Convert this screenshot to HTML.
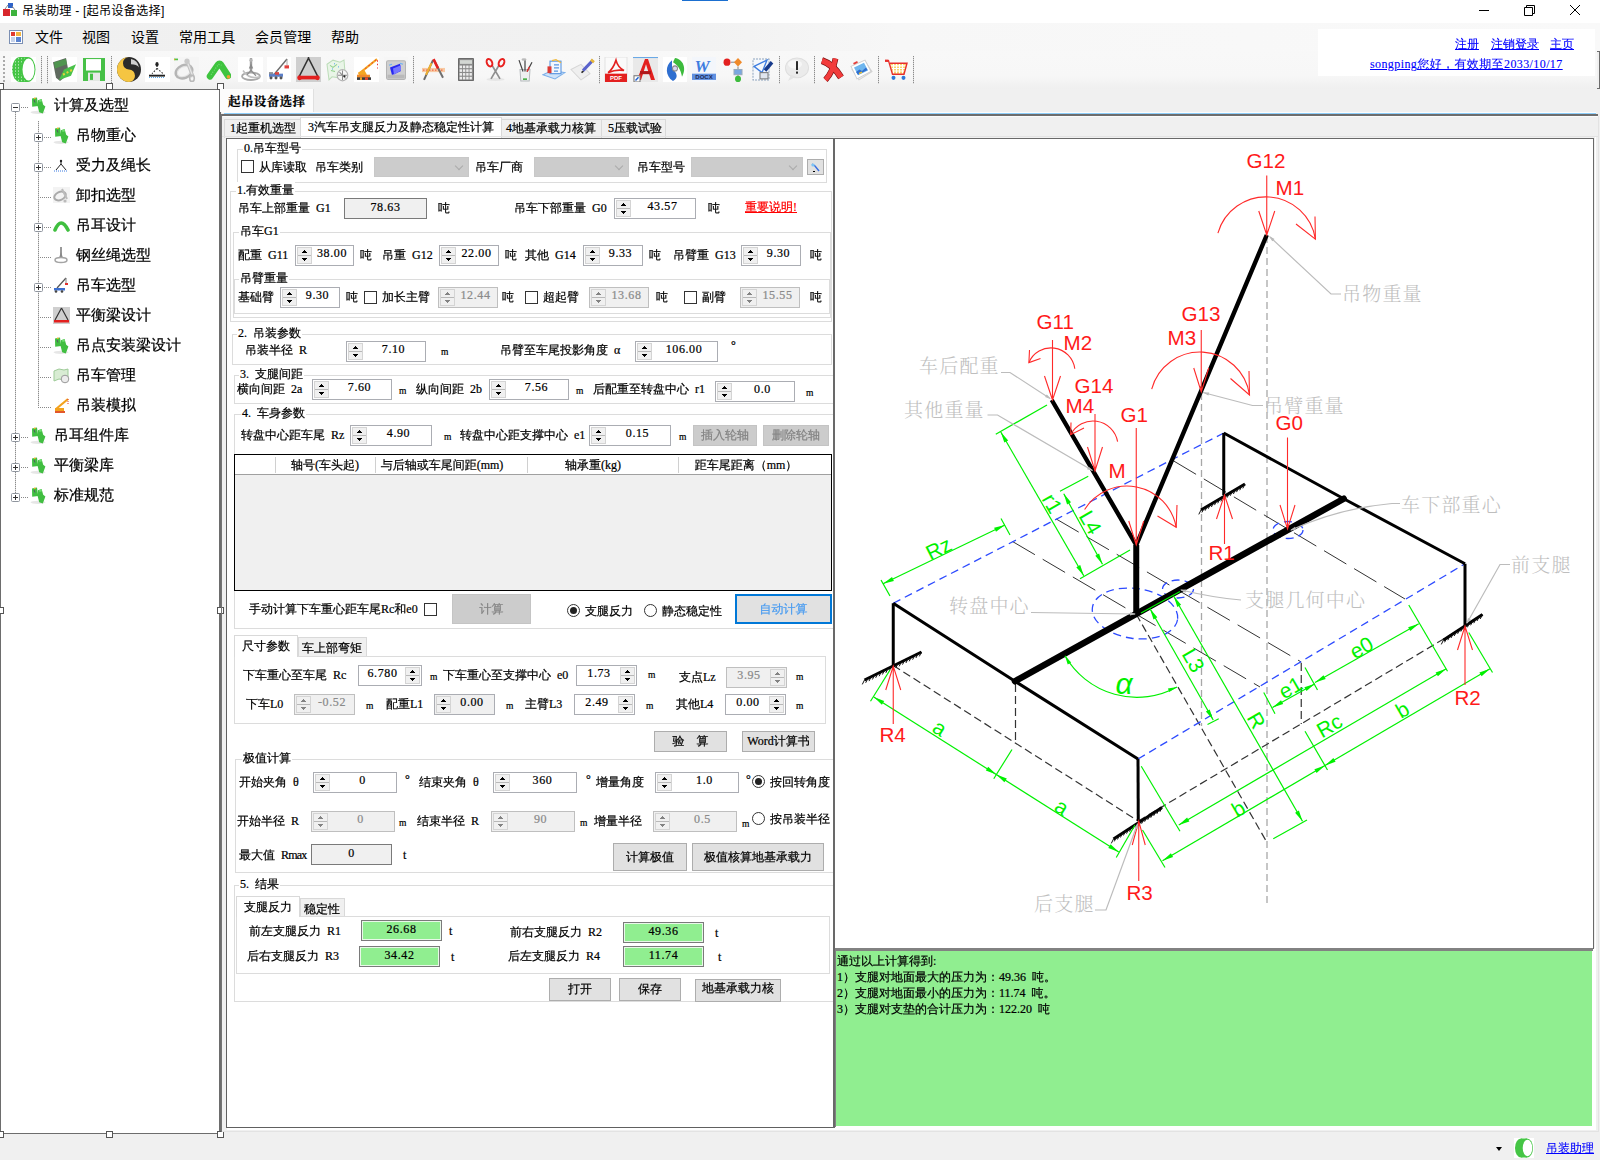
<!DOCTYPE html>
<html lang="zh-CN"><head><meta charset="utf-8"><title>吊装助理 - [起吊设备选择]</title>
<style>
*{box-sizing:content-box;margin:0;padding:0}
html,body{width:1600px;height:1160px;overflow:hidden;background:#f0f0f0}
body{position:relative;font-family:"Liberation Serif","WenQuanYi Zen Hei","Noto Sans CJK SC",sans-serif;font-size:12px;color:#000;word-spacing:3px;-webkit-text-stroke:.22px}
div,i,span,svg,a{position:absolute;display:block}
.t{height:16px;line-height:16px;white-space:nowrap}
.u{font-size:9.5px}
.gl{background:#fff;padding:0 1px}
.gb{border:1px solid #dcdcdc}
.sp{border:1px solid #abadb3;background:#fff}
.sp.dis{background:#f0f0f0;color:#8a8a8a;border-color:#bfbfbf}
.sb{top:1px;width:13px;height:15px;background:#f0f0f0;border:1px solid #d4d4d4;box-shadow:inset 0 0 0 0 #fff}
.sb:before{content:"";position:absolute;left:0;right:0;top:7px;height:1px;background:#b8b8b8}
.sb:after{content:"";position:absolute;left:4px;top:2px;width:5px;height:11px;
 background:
  linear-gradient(#000,#000) 2px 0/1px 1px no-repeat,
  linear-gradient(#000,#000) 1px 1px/3px 1px no-repeat,
  linear-gradient(#000,#000) 0 2px/5px 1px no-repeat,
  linear-gradient(#000,#000) 0 8px/5px 1px no-repeat,
  linear-gradient(#000,#000) 1px 9px/3px 1px no-repeat,
  linear-gradient(#000,#000) 2px 10px/1px 1px no-repeat}
.dis .sb:after{opacity:.45}
.sv{top:-1px;height:16px;line-height:16px;text-align:center;white-space:nowrap;letter-spacing:.6px}
.cb{width:11px;height:11px;border:1px solid #333;background:#fff}
.rd{width:11px;height:11px;border:1px solid #333;border-radius:50%;background:#fff}
.rd i{left:2px;top:2px;width:7px;height:7px;border-radius:50%;background:#222}
.bt{border:1px solid #adadad;background:#e1e1e1;text-align:center;white-space:nowrap}
.bg{border:1px solid #c4c4c4;background:#ccc;color:#838383;text-align:center;white-space:nowrap}
.ro{border:1px solid #7a7a7a;background:#f0f0f0;text-align:center}
.gr{border:1px solid #7a7a7a;background:#90ee90;box-shadow:inset 0 0 0 1px #e8f8e8;text-align:center}
.cmb{background:#ccc;border:1px solid #c8c8c8}
.cmb:after{content:"";position:absolute;right:6px;top:5px;width:5px;height:5px;border-right:1px solid #aaa;border-bottom:1px solid #aaa;transform:rotate(45deg)}
.tab{border:1px solid #d9d9d9;border-bottom:none;background:#f0f0f0;white-space:nowrap}
.tab.sel{background:#fff}
.lk{color:#00f;text-decoration:underline;text-decoration-thickness:1px;text-underline-offset:1px;-webkit-text-stroke:.1px}
.mn{font-family:"Liberation Sans","Noto Sans CJK SC",sans-serif;font-size:13.5px;height:20px;line-height:20px;white-space:nowrap;word-spacing:0;-webkit-text-stroke:0}
.tr{font-size:15px;height:20px;line-height:20px;white-space:nowrap;letter-spacing:0}
.hd{width:7px;height:7px;border:1px solid #555;background:#fff;box-sizing:border-box}
.ex{width:7px;height:7px;border:1px solid #8f959e;border-radius:1.5px;background:#fff}
.ex:before{content:"";position:absolute;left:1px;top:3px;width:5px;height:1px;background:#333}
.ex.p:after{content:"";position:absolute;left:3px;top:1px;width:1px;height:5px;background:#333}
.dv{width:1px;background:repeating-linear-gradient(#8c8c8c 0 1px,#d8d8d8 1px 2px)}
.dh{height:1px;background:repeating-linear-gradient(90deg,#888 0 1px,transparent 1px 2px)}
</style></head>
<body>
<div style="left:0px;top:0px;width:1600px;height:23px;background:#fff"></div>
<div style="left:682px;top:0px;width:46px;height:1px;background:#1b6fd0"></div>
<svg style="left:3px;top:3px" width="15" height="14" viewBox="0 0 15 14"><rect x="5" y="0" width="5" height="5" fill="#2f63c8"/><rect x="0" y="6" width="7" height="7" fill="#d8262c"/><rect x="8" y="7" width="6" height="6" fill="#3db33d"/><path d="M5 2l-3 4M9 3l3 4" stroke="#888" stroke-width="1"/></svg>
<div class="mn" style="left:22px;top:1px;font-size:12.2px;letter-spacing:.2px">吊装助理 - [起吊设备选择]</div>
<svg style="left:1470px;top:0" width="130" height="23" viewBox="0 0 130 23"><path d="M9 10.5h10M54.5 7.5h8v8h-8zM56.5 7.5v-2h8v8h-2M100 5l10 10M110 5l-10 10" stroke="#000" stroke-width="1" fill="none"/></svg>
<div style="left:0px;top:23px;width:1600px;height:28px;background:linear-gradient(90deg,#f0f0f0 0,#f1f1f1 42%,#f7f7f7 56%,#f9f9f9 100%)"></div>
<div style="left:0px;top:51px;width:1600px;height:38px;background:linear-gradient(#f8f8f8 0,#f7f7f7 65%,#efefef 100%)"></div>
<svg style="left:9px;top:30px" width="14" height="14" viewBox="0 0 14 14"><rect x=".5" y=".5" width="13" height="13" fill="#fff" stroke="#7b8fb3"/><rect x="2" y="2" width="4" height="4" fill="#e03a2f"/><rect x="7" y="2" width="5" height="4" fill="#f4b63f"/><rect x="2" y="7" width="4" height="5" fill="#c7d3ea"/><rect x="7" y="7" width="5" height="5" fill="#5b83cf"/></svg>
<div class="mn" style="left:35px;top:27px;font-size:14px;letter-spacing:.1px">文件</div>
<div class="mn" style="left:82px;top:27px;font-size:14px;letter-spacing:.1px">视图</div>
<div class="mn" style="left:131px;top:27px;font-size:14px;letter-spacing:.1px">设置</div>
<div class="mn" style="left:179px;top:27px;font-size:14px;letter-spacing:.1px">常用工具</div>
<div class="mn" style="left:255px;top:27px;font-size:14px;letter-spacing:.1px">会员管理</div>
<div class="mn" style="left:331px;top:27px;font-size:14px;letter-spacing:.1px">帮助</div>
<div style="left:1318px;top:29px;width:277px;height:47px;background:#fff"></div>
<div class="t lk" style="left:1455px;top:36px">注册</div>
<div class="t lk" style="left:1491px;top:36px">注销登录</div>
<div class="t lk" style="left:1550px;top:36px">主页</div>
<div class="t lk" style="left:1370px;top:56px;word-spacing:0;letter-spacing:.4px">songping您好，有效期至2033/10/17</div>
<div style="left:1597px;top:51px;width:3px;height:38px;border:1px solid #6d6d6d;border-left:none;box-sizing:border-box;background:#f0f0f0"></div>
<div style="left:3px;top:56px;width:2px;height:26px;background:repeating-linear-gradient(#aaa 0 2px,transparent 2px 4px)"></div>
<div class="dv" style="left:41px;top:56px;height:28px"></div>
<div class="dv" style="left:47px;top:56px;height:28px"></div>
<div class="dv" style="left:111px;top:56px;height:28px"></div>
<div class="dv" style="left:413px;top:56px;height:28px"></div>
<div class="dv" style="left:599px;top:56px;height:28px"></div>
<div class="dv" style="left:779px;top:56px;height:28px"></div>
<div class="dv" style="left:814px;top:56px;height:28px"></div>
<div class="dv" style="left:878px;top:56px;height:28px"></div>
<div class="dv" style="left:913px;top:56px;height:28px"></div>
<svg style="left:11px;top:57px" width="25" height="25" viewBox="0 0 25 24" preserveAspectRatio="none"><defs><pattern id="dt" width="3" height="3" patternUnits="userSpaceOnUse"><rect width="3" height="3" fill="#45c545"/><rect x="1" y="1" width="1" height="1" fill="#d9f5d9"/></pattern></defs><rect width="25" height="24" fill="#fff"/><ellipse cx="9" cy="12" rx="8" ry="12" fill="url(#dt)"/><rect x="9" y="0" width="8" height="24" fill="url(#dt)"/><ellipse cx="17" cy="12" rx="7.5" ry="12" fill="#45c545"/><ellipse cx="17.5" cy="12" rx="6" ry="10.5" fill="#fff"/></svg>
<svg style="left:52px;top:57px" width="25" height="25" viewBox="0 0 25 24" preserveAspectRatio="none"><rect width="25" height="24" fill="#fff"/><path d="M1 5l13-4 3 15-9 7-4-3z" fill="#5f6a5f"/><path d="M2 5l12-3 1 5-12 4z" fill="#4aa84a" opacity=".7"/><path d="M7 22l5-10 12-5-5 11z" fill="#49c149"/><path d="M11 17l10-5" stroke="#e3d23a" stroke-width="2" stroke-dasharray="2 2"/></svg>
<svg style="left:82px;top:57px" width="24" height="25" viewBox="0 0 24 24" preserveAspectRatio="none"><rect x="1" y="1" width="22" height="22" fill="#46c046"/><rect x="4" y="2" width="15" height="11" fill="#fff"/><rect x="6" y="15" width="12" height="8" fill="#e9e9e9"/><rect x="8" y="16" width="3" height="6" fill="#46c046"/></svg>
<svg style="left:117px;top:57px" width="24" height="25" viewBox="0 0 24 24" preserveAspectRatio="none"><circle cx="12" cy="12" r="12" fill="#2b2b2b"/><path d="M12 0a12 12 0 0 0 0 24a6 6 0 0 0 0-12a6 6 0 0 1 0-12z" fill="#f5c542"/><path d="M14 2a10 10 0 0 1 8 8a9 5 0 0 0-8-3z" fill="#cfcfcf"/></svg>
<svg style="left:145px;top:57px" width="25" height="25" viewBox="0 0 25 24" preserveAspectRatio="none"><rect width="25" height="24" fill="#fff"/><path d="M12 8v3M12 11l-5 5M12 11l6 5" stroke="#222" stroke-width="1" stroke-dasharray="1.5 1.5" fill="none"/><ellipse cx="12" cy="7" rx="1.6" ry="2.2" fill="#222"/><rect x="4" y="17" width="16" height="1.8" fill="#222"/><path d="M4 19.6h16" stroke="#5aa9ea" stroke-width="1" stroke-dasharray="1 1"/></svg>
<svg style="left:174px;top:57px" width="25" height="25" viewBox="0 0 25 24" preserveAspectRatio="none"><rect width="25" height="24" fill="#f5f5f5"/><ellipse cx="10" cy="14" rx="8.5" ry="6" fill="none" stroke="#b5b5b5" stroke-width="2.6" transform="rotate(-22 10 14)"/><ellipse cx="10" cy="14" rx="7" ry="4.6" fill="none" stroke="#e2e2e2" stroke-width="1" transform="rotate(-22 10 14)"/><path d="M13 4l6 15" stroke="#c2c2c2" stroke-width="3.4"/><path d="M13 4l6 15" stroke="#e6e6e6" stroke-width="1.2"/><circle cx="13" cy="4" r="2.6" fill="#c9c9c9"/><ellipse cx="18" cy="20.5" rx="2.3" ry="3" fill="none" stroke="#b9b9b9" stroke-width="1.6"/><rect x="0" y="1.5" width="4" height="1.6" fill="#4cc24c"/><rect x="0" y="1.8" width="1.2" height="1.2" fill="#e8b020"/></svg>
<svg style="left:206px;top:57px" width="25" height="25" viewBox="0 0 25 24" preserveAspectRatio="none"><path d="M4 18.5L12 7.5Q13.5 5.5 15 7.5L22 18" stroke="#3fc43f" stroke-width="6.5" fill="none" stroke-linecap="round" stroke-linejoin="round"/><path d="M5 17L12.5 7l3 1" stroke="#7fe07f" stroke-width="1" stroke-dasharray="1 1.5" fill="none"/><circle cx="22.5" cy="19" r="1.8" fill="#f0a030"/></svg>
<svg style="left:238px;top:57px" width="25" height="25" viewBox="0 0 25 24" preserveAspectRatio="none"><rect width="25" height="24" fill="#fff"/><path d="M13 1v13" stroke="#9d9d9d" stroke-width="2.4"/><path d="M13 6l-2.2 5h4.4z" fill="#8a8a8a"/><circle cx="13" cy="3" r="1.6" fill="#b5b5b5"/><ellipse cx="13" cy="18.5" rx="9" ry="3.6" fill="none" stroke="#a9a9a9" stroke-width="1.8"/><path d="M5 13q6 9 17 6" stroke="#c0c0c0" stroke-width="1.6" fill="none"/><path d="M13 13l-4 4M13 13l5 5" stroke="#8d8d8d" stroke-width="1.2"/></svg>
<svg style="left:267px;top:57px" width="24" height="25" viewBox="0 0 24 24" preserveAspectRatio="none"><rect width="24" height="24" fill="#fff"/><path d="M6 18L20 2" stroke="#6a6a6a" stroke-width="1.4"/><path d="M20 2v6" stroke="#999" stroke-width=".8"/><rect x="17.5" y="8" width="4.5" height="3" fill="#e3403c"/><rect x="2" y="16" width="14" height="3" fill="#5b7fc8"/><rect x="8" y="14.5" width="4" height="2.5" fill="#d9453f"/><rect x="2" y="14.5" width="4" height="2" fill="#8a8f98"/><circle cx="4" cy="20" r="1.5" fill="#555"/><circle cx="9" cy="20" r="1.5" fill="#555"/><circle cx="14" cy="20" r="1.5" fill="#555"/></svg>
<svg style="left:296px;top:57px" width="25" height="25" viewBox="0 0 25 24" preserveAspectRatio="none"><rect width="25" height="24" fill="#cfcfcf"/><path d="M12.5 1L3 19M12.5 1L22 19M12.5 0v3" stroke="#333" stroke-width="1.5" fill="none"/><rect x="2" y="18" width="21" height="3.5" fill="#e3201f"/><circle cx="3.5" cy="20" r="2.3" fill="#e3201f"/><circle cx="21.5" cy="20" r="2.3" fill="#e3201f"/></svg>
<svg style="left:325px;top:57px" width="24" height="25" viewBox="0 0 24 24" preserveAspectRatio="none"><path d="M2 7l6-4 7 2 4-2 1 12-5 5-8-1-3 3z" fill="#e9f5e7" stroke="#bcdcb8" stroke-width="1"/><path d="M5 8l3 2 4-3M6 13l4 1" stroke="#8fd08a" stroke-width="1" fill="none"/><rect x="9" y="6" width="1" height="1" fill="#5aa9ea"/><rect x="13" y="9" width="1" height="1" fill="#5aa9ea"/><rect x="7" y="11" width="1" height="1" fill="#5aa9ea"/><circle cx="17.5" cy="17.5" r="5.3" fill="#f6f6f6" stroke="#b3b3b3" stroke-width="1.2"/><path d="M17.5 13v9M13 17.5h9M14.5 14.5l6 6" stroke="#8a8a8a" stroke-width="1"/><circle cx="19.5" cy="18.5" r="1" fill="#222"/></svg>
<svg style="left:354px;top:57px" width="25" height="25" viewBox="0 0 25 24" preserveAspectRatio="none"><rect width="25" height="24" fill="#fff"/><path d="M5 16L23 2" stroke="#f5a623" stroke-width="2"/><path d="M5 16L23 2" stroke="#e8452c" stroke-width="1" stroke-dasharray="1.5 2.5"/><path d="M23.5 3v8" stroke="#e33" stroke-width="1" stroke-dasharray="1.5 2"/><path d="M4 15l6-3 3 5-8 1z" fill="#f5a623"/><rect x="3" y="17" width="13" height="3" fill="#f08a2a"/><rect x="3" y="19.5" width="14" height="2.5" fill="#3a3a3a"/><rect x="6" y="19.5" width="2" height="2.5" fill="#f5a623"/><rect x="11" y="19.5" width="3" height="2.5" fill="#e8452c"/></svg>
<svg style="left:384px;top:57px" width="24" height="25" viewBox="0 0 24 24" preserveAspectRatio="none"><rect width="24" height="24" fill="#f6f6f6"/><rect x="2.5" y="3.5" width="19" height="18" rx="1.5" fill="#cfcfcf" stroke="#b4b4b4" stroke-width="1"/><path d="M6 10l10-3.5 1 7-9 4z" fill="#2828f0"/><path d="M9 11l8-3 0 5-7 4z" fill="#7676ff"/><path d="M5 8l3-1M16 6l3 1" stroke="#6ab0f5" stroke-width="1"/><rect x="3.5" y="17" width="17" height="3.5" fill="#b9b9b9"/></svg>
<svg style="left:421px;top:57px" width="25" height="25" viewBox="0 0 25 24" preserveAspectRatio="none"><rect x="1" y="10.5" width="23" height="4" fill="#f8c9a2"/><path d="M2 12.5h21" stroke="#f06a4a" stroke-width="1.2" stroke-dasharray="1.5 1.5"/><path d="M12 3L3 22" stroke="#6a6a6a" stroke-width="2"/><path d="M10.5 6L5 17" stroke="#f0b030" stroke-width="2"/><path d="M13 3L22 20" stroke="#6f6f6f" stroke-width="2"/><path d="M12.5 2l4.5 9" stroke="#e3201f" stroke-width="2.6"/></svg>
<svg style="left:457px;top:57px" width="18" height="25" viewBox="0 0 18 24" preserveAspectRatio="none"><rect x="1" y="1" width="16" height="22" rx="1" fill="#8a8a8a"/><rect x="1.5" y="1.5" width="15" height="21" rx="1" fill="none" stroke="#6a6a6a" stroke-width="1"/><rect x="3" y="3" width="12" height="3.6" fill="#d3d7d3"/><g fill="#ececec"><rect x="2.6" y="8.2" width="2.4" height="2.5"/><rect x="5.9" y="8.2" width="2.4" height="2.5"/><rect x="9.2" y="8.2" width="2.4" height="2.5"/><rect x="12.5" y="8.2" width="2.4" height="2.5"/><rect x="2.6" y="11.8" width="2.4" height="2.5"/><rect x="5.9" y="11.8" width="2.4" height="2.5"/><rect x="9.2" y="11.8" width="2.4" height="2.5"/><rect x="12.5" y="11.8" width="2.4" height="2.5"/><rect x="2.6" y="15.4" width="2.4" height="2.5"/><rect x="5.9" y="15.4" width="2.4" height="2.5"/><rect x="9.2" y="15.4" width="2.4" height="2.5"/><rect x="12.5" y="15.4" width="2.4" height="2.5"/><rect x="2.6" y="19.0" width="2.4" height="2.5"/><rect x="5.9" y="19.0" width="2.4" height="2.5"/><rect x="9.2" y="19.0" width="2.4" height="2.5"/><rect x="12.5" y="19.0" width="2.4" height="2.5"/></g></svg>
<svg style="left:484px;top:57px" width="23" height="25" viewBox="0 0 23 24" preserveAspectRatio="none"><ellipse cx="11.5" cy="21.5" rx="9" ry="1.5" fill="#e6e6e6"/><path d="M8 8l8 13M15 8L7 21" stroke="#8f8f8f" stroke-width="1.7"/><ellipse cx="5.5" cy="5.5" rx="2.6" ry="3.8" fill="none" stroke="#e8211f" stroke-width="1.9" transform="rotate(-28 5.5 5.5)"/><ellipse cx="17.5" cy="5.5" rx="2.6" ry="3.8" fill="none" stroke="#e8211f" stroke-width="1.9" transform="rotate(28 17.5 5.5)"/></svg>
<svg style="left:516px;top:57px" width="18" height="25" viewBox="0 0 18 24" preserveAspectRatio="none"><path d="M4 12h10l-.8 11H4.8z" fill="#eef0f1" stroke="#b4b9bc" stroke-width="1"/><path d="M7 14L3 3M9 14V2M11 14l5-9" stroke="#444" stroke-width="1.2"/><path d="M11 14l2.5-4.5" stroke="#d33" stroke-width="1.4"/><ellipse cx="8" cy="2.5" rx="2.5" ry="1.2" fill="#bbb"/><rect x="7" y="20.5" width="4" height="1.5" fill="#3fae3f"/></svg>
<svg style="left:542px;top:57px" width="24" height="25" viewBox="0 0 24 24" preserveAspectRatio="none"><path d="M1 17l9-4 13 2-10 6z" fill="#cfe3f8" stroke="#7db0ea" stroke-width="1"/><rect x="8" y="4" width="11" height="12" fill="#f2f7fd" stroke="#5a96e0" stroke-width="1.1"/><rect x="5.5" y="9" width="4" height="6.5" fill="#dc3a34"/><path d="M12 7.5h5M12 10.5h5M12 13.5h4" stroke="#5a96e0" stroke-width="1.1"/><path d="M10 3.5l4-1 5 3" stroke="#f0b93a" stroke-width="1.3" fill="none"/></svg>
<svg style="left:570px;top:57px" width="25" height="25" viewBox="0 0 25 24" preserveAspectRatio="none"><path d="M1 12l10-5 9 9-9 6z" fill="#efefef" stroke="#d6d6d6" stroke-width="1"/><path d="M13 13L23 3" stroke="#5a63cc" stroke-width="3"/><path d="M21 2.5l3 2.5" stroke="#e8b83a" stroke-width="2.6"/><path d="M11.5 15l2-1.5" stroke="#222" stroke-width="1.6"/></svg>
<svg style="left:604px;top:57px" width="24" height="25" viewBox="0 0 24 24" preserveAspectRatio="none"><rect x="1" y="0" width="22" height="24" fill="#fafafa" stroke="#e2e2e2" stroke-width="1"/><path d="M12 3c-2 6-5 10-8 12 5-2 11-3 16-2-4-2-7-6-8-10z" fill="none" stroke="#e3201f" stroke-width="1.6"/><rect x="1" y="16" width="22" height="8" fill="#e3201f"/><text x="12" y="22.5" font-family="Liberation Sans,sans-serif" font-size="6" font-weight="bold" fill="#fff" text-anchor="middle">PDF</text></svg>
<svg style="left:633px;top:57px" width="25" height="25" viewBox="0 0 25 24" preserveAspectRatio="none"><rect width="25" height="24" fill="#e9e9e9"/><rect x="0" y="0" width="25" height="1" fill="#6aa9e6"/><path d="M4 22L12 2h3l7 20h-4l-5-15-5 15z" fill="#e3201f"/><path d="M7 15h11" stroke="#b0171a" stroke-width="3"/><rect x="1" y="18" width="6" height="6" fill="#fff" stroke="#777" stroke-width="1"/><path d="M2.5 22.5l3-3" stroke="#1f5fd0" stroke-width="1.5"/></svg>
<svg style="left:663px;top:57px" width="24" height="25" viewBox="0 0 24 24" preserveAspectRatio="none"><rect width="24" height="24" fill="#fff"/><path d="M9 3C2 8 2 18 10 23c6-3 4-8-1-12z" fill="#2f6fd0"/><path d="M12 1c8 1 12 10 7 18-1-7-5-12-9-14z" fill="#3dbb3d"/><circle cx="12" cy="11" r="2.5" fill="#d9d9f3" stroke="#888" stroke-width="1"/></svg>
<svg style="left:692px;top:57px" width="24" height="25" viewBox="0 0 24 24" preserveAspectRatio="none"><rect width="24" height="24" fill="#f3f6fb"/><text x="10" y="14" font-family="Liberation Serif,serif" font-size="17" font-style="italic" font-weight="bold" fill="#3e7de0" text-anchor="middle">W</text><rect x="0" y="16" width="24" height="6" fill="#5f8fe0"/><text x="12" y="21.5" font-family="Liberation Sans,sans-serif" font-size="6" font-weight="bold" fill="#1c2a55" text-anchor="middle">DOCX</text></svg>
<svg style="left:723px;top:57px" width="20" height="25" viewBox="0 0 20 24" preserveAspectRatio="none"><circle cx="4" cy="5" r="3.5" fill="#e3201f"/><path d="M8 5h4" stroke="#888" stroke-width="1"/><path d="M15 1l4 4-4 4-4-4z" fill="#f08a2a"/><path d="M15 9v3M15 17v2" stroke="#888" stroke-width="1"/><rect x="11" y="12" width="8" height="5" fill="#7aa7e0" stroke="#9ab" stroke-width="1"/><circle cx="15" cy="21" r="3" fill="#3dbb3d"/></svg>
<svg style="left:750px;top:57px" width="24" height="25" viewBox="0 0 24 24" preserveAspectRatio="none"><rect x="3" y="2" width="16" height="20" fill="#f5f8fc" stroke="#8ea3bd" stroke-width="1" stroke-dasharray="2 1"/><path d="M4 9l13-6-5 12z" fill="none" stroke="#3e7de0" stroke-width="1.3"/><path d="M15 13l7-8" stroke="#173a8c" stroke-width="3.5"/><rect x="10" y="15" width="8" height="6" fill="#dfe5ee" stroke="#777" stroke-width="1"/></svg>
<svg style="left:785px;top:57px" width="24" height="25" viewBox="0 0 24 24" preserveAspectRatio="none"><ellipse cx="12" cy="10.5" rx="11.5" ry="9.5" fill="#ebebeb" stroke="#dedede" stroke-width="1"/><path d="M6 17l-3 6 8-4z" fill="#e4e4e4"/><ellipse cx="10" cy="7" rx="7" ry="4" fill="#f6f6f6"/><rect x="11" y="4" width="2" height="8.5" fill="#2a2a2a"/><rect x="11" y="14" width="2" height="2" fill="#2a2a2a"/></svg>
<svg style="left:820px;top:57px" width="24" height="25" viewBox="0 0 24 24" preserveAspectRatio="none"><g fill="none" stroke-linecap="butt"><path d="M2 3.5Q13 7 21 19.5" stroke="#7a1010" stroke-width="6.6"/><path d="M5.5 22Q13 14 15.5 1.5" stroke="#7a1010" stroke-width="5.8"/><path d="M2 3.5Q13 7 21 19.5" stroke="#f23c3c" stroke-width="5.4"/><path d="M5.5 22Q13 14 15.5 1.5" stroke="#f23c3c" stroke-width="4.6"/></g></svg>
<svg style="left:849px;top:57px" width="24" height="25" viewBox="0 0 24 24" preserveAspectRatio="none"><path d="M3 12l13-8 7 10-13 8z" fill="#f4f4f4" stroke="#d2d2d2" stroke-width="1"/><path d="M2 9l14-6 6 11-14 7z" fill="#fff" stroke="#cfcfcf" stroke-width="1"/><path d="M5 10l10-4.5 4 7.5-10 4.5z" fill="#6fb6ee"/><path d="M7 14.5l3.5-2.5 2.5 1.5 4-3.5 1.5 2.5-9.5 4.5z" fill="#2f6fd0"/><path d="M10 16l3-1.5" stroke="#f0c030" stroke-width="1.4"/><path d="M4.5 6.5l4-1.8" stroke="#e3403c" stroke-width="1.8"/></svg>
<svg style="left:884px;top:57px" width="24" height="25" viewBox="0 0 24 24" preserveAspectRatio="none"><path d="M6 6h17l-3 10H9z" fill="#fbd46a"/><path d="M7 8.5h15.5M7.8 11h14M8.6 13.5h12.6M9.5 6v10M12.5 6v10M15.5 6v10M18.5 6v10" stroke="#fff" stroke-width="1"/><path d="M1 3.5h3.5L8.5 16.5h11.5L23 6H6" fill="none" stroke="#e8302c" stroke-width="1.4"/><rect x="1" y="2.5" width="3.5" height="2.2" fill="#e8302c"/><circle cx="9.5" cy="20" r="2" fill="#2f78d8"/><circle cx="19.5" cy="20" r="2" fill="#2f78d8"/></svg>
<div style="left:0px;top:89px;width:219px;height:1044px;background:#fff;border:1px solid #6d6d6d;border-right:2px solid #6d6d6d;width:218px;height:1043px"></div>
<div class="hd" style="left:-3px;top:83px"></div>
<div class="hd" style="left:106px;top:83px"></div>
<div class="hd" style="left:217px;top:83px"></div>
<div class="hd" style="left:-3px;top:607px"></div>
<div class="hd" style="left:217px;top:607px"></div>
<div class="hd" style="left:-3px;top:1131px"></div>
<div class="hd" style="left:106px;top:1131px"></div>
<div class="hd" style="left:217px;top:1131px"></div>
<div class="dv" style="left:15px;top:112px;height:384px"></div>
<div class="dv" style="left:38px;top:121px;height:285px"></div>
<div class="dh" style="left:15px;top:107px;width:14px"></div>
<div class="ex" style="left:11px;top:103px"></div>
<svg style="left:30px;top:97px" width="17" height="17" viewBox="0 0 17 17"><ellipse cx="8" cy="15.3" rx="7.5" ry="1.6" fill="#e6e6e6"/><path d="M2 1.5l5-1 1.2 8.5-6 .8z" fill="#41be41"/><path d="M8 3.2l3.6-1.2 1.6 5.8 2.2 1.6-2.6 7-3.6-1.2L7.6 9z" fill="#41be41"/><path d="M9 3l2.5-.8.6 2-2.6.9z" fill="#6fe06f"/><path d="M4 3l1 2.5" stroke="#556" stroke-width="1"/><rect x="4" y=".6" width="1.6" height="1.4" fill="#f0b428"/></svg>
<div class="tr" style="left:54px;top:95px">计算及选型</div>
<div class="dh" style="left:38px;top:137px;width:14px"></div>
<div class="ex p" style="left:34px;top:133px"></div>
<svg style="left:53px;top:127px" width="17" height="17" viewBox="0 0 17 17"><ellipse cx="8" cy="15.3" rx="7.5" ry="1.6" fill="#e6e6e6"/><path d="M2 1.5l5-1 1.2 8.5-6 .8z" fill="#41be41"/><path d="M8 3.2l3.6-1.2 1.6 5.8 2.2 1.6-2.6 7-3.6-1.2L7.6 9z" fill="#41be41"/><path d="M9 3l2.5-.8.6 2-2.6.9z" fill="#6fe06f"/><path d="M4 3l1 2.5" stroke="#556" stroke-width="1"/><rect x="4" y=".6" width="1.6" height="1.4" fill="#f0b428"/></svg>
<div class="tr" style="left:76px;top:125px">吊物重心</div>
<div class="dh" style="left:38px;top:167px;width:14px"></div>
<div class="ex p" style="left:34px;top:163px"></div>
<svg style="left:53px;top:157px" width="17" height="17" viewBox="0 0 17 17"><path d="M8 4v3M8 7l-5 6M8 7l5 6" stroke="#222" stroke-width="1" fill="none"/><circle cx="8" cy="4" r="1.2" fill="#222"/><path d="M1 14h14" stroke="#3b7be0" stroke-width="1" stroke-dasharray="1 1"/></svg>
<div class="tr" style="left:76px;top:155px">受力及绳长</div>
<div class="dh" style="left:38px;top:197px;width:14px"></div>
<svg style="left:53px;top:187px" width="17" height="17" viewBox="0 0 17 17"><rect width="17" height="16" fill="#f3f3f3"/><ellipse cx="7" cy="9" rx="6" ry="4" fill="none" stroke="#aaa" stroke-width="2" transform="rotate(-25 7 9)"/><path d="M9 2l5 10" stroke="#bbb" stroke-width="2"/><circle cx="12" cy="14" r="1.6" fill="#bbb"/></svg>
<div class="tr" style="left:76px;top:185px">卸扣选型</div>
<div class="dh" style="left:38px;top:227px;width:14px"></div>
<div class="ex p" style="left:34px;top:223px"></div>
<svg style="left:53px;top:217px" width="17" height="17" viewBox="0 0 17 17"><path d="M2 13Q8 -1 15 13" stroke="#3fbf3f" stroke-width="3.6" fill="none" stroke-linecap="round"/></svg>
<div class="tr" style="left:76px;top:215px">吊耳设计</div>
<div class="dh" style="left:38px;top:257px;width:14px"></div>
<svg style="left:53px;top:247px" width="17" height="17" viewBox="0 0 17 17"><path d="M8 0v8" stroke="#999" stroke-width="2"/><path d="M8 5l-2 6h4z" fill="#888"/><ellipse cx="8" cy="13" rx="6" ry="2.5" fill="none" stroke="#a4a4a4" stroke-width="1.5"/></svg>
<div class="tr" style="left:76px;top:245px">钢丝绳选型</div>
<div class="dh" style="left:38px;top:287px;width:14px"></div>
<div class="ex p" style="left:34px;top:283px"></div>
<svg style="left:53px;top:277px" width="17" height="17" viewBox="0 0 17 17"><path d="M4 11L13 1" stroke="#555" stroke-width="1.2"/><path d="M13 1v5" stroke="#888"/><rect x="12" y="6" width="3" height="2" fill="#e0312f"/><rect x="1" y="11" width="11" height="2.5" fill="#3c6fd0"/><circle cx="3" cy="14.5" r="1.3" fill="#444"/><circle cx="9" cy="14.5" r="1.3" fill="#444"/></svg>
<div class="tr" style="left:76px;top:275px">吊车选型</div>
<div class="dh" style="left:38px;top:317px;width:14px"></div>
<svg style="left:53px;top:307px" width="17" height="17" viewBox="0 0 17 17"><rect width="17" height="17" fill="#cfcfcf"/><path d="M8.5 1L2 13M8.5 1L15 13" stroke="#333" stroke-width="1.2" fill="none"/><rect x="1" y="13" width="15" height="2.5" fill="#e3201f"/></svg>
<div class="tr" style="left:76px;top:305px">平衡梁设计</div>
<div class="dh" style="left:38px;top:347px;width:14px"></div>
<svg style="left:53px;top:337px" width="17" height="17" viewBox="0 0 17 17"><ellipse cx="8" cy="15.3" rx="7.5" ry="1.6" fill="#e6e6e6"/><path d="M2 1.5l5-1 1.2 8.5-6 .8z" fill="#41be41"/><path d="M8 3.2l3.6-1.2 1.6 5.8 2.2 1.6-2.6 7-3.6-1.2L7.6 9z" fill="#41be41"/><path d="M9 3l2.5-.8.6 2-2.6.9z" fill="#6fe06f"/><path d="M4 3l1 2.5" stroke="#556" stroke-width="1"/><rect x="4" y=".6" width="1.6" height="1.4" fill="#f0b428"/></svg>
<div class="tr" style="left:76px;top:335px">吊点安装梁设计</div>
<div class="dh" style="left:38px;top:377px;width:14px"></div>
<svg style="left:53px;top:367px" width="17" height="17" viewBox="0 0 17 17"><path d="M1 4l5-2 5 1 4-1v9l-4 2-5-1-5 2z" fill="#d8ecd3" stroke="#9ecb98" stroke-width="1"/><circle cx="12" cy="12" r="3.8" fill="#ececec" stroke="#999" stroke-width="1"/></svg>
<div class="tr" style="left:76px;top:365px">吊车管理</div>
<div class="dh" style="left:38px;top:407px;width:14px"></div>
<svg style="left:53px;top:397px" width="17" height="17" viewBox="0 0 17 17"><path d="M3 12L15 2" stroke="#f3a21d" stroke-width="2.2"/><path d="M15 2v6" stroke="#d33" stroke-dasharray="1 1"/><rect x="2" y="11" width="9" height="3" fill="#f3a21d"/><rect x="2" y="14" width="10" height="2" fill="#e2572b"/></svg>
<div class="tr" style="left:76px;top:395px">吊装模拟</div>
<div class="dh" style="left:15px;top:437px;width:14px"></div>
<div class="ex p" style="left:11px;top:433px"></div>
<svg style="left:30px;top:427px" width="17" height="17" viewBox="0 0 17 17"><ellipse cx="8" cy="15.3" rx="7.5" ry="1.6" fill="#e6e6e6"/><path d="M2 1.5l5-1 1.2 8.5-6 .8z" fill="#41be41"/><path d="M8 3.2l3.6-1.2 1.6 5.8 2.2 1.6-2.6 7-3.6-1.2L7.6 9z" fill="#41be41"/><path d="M9 3l2.5-.8.6 2-2.6.9z" fill="#6fe06f"/><path d="M4 3l1 2.5" stroke="#556" stroke-width="1"/><rect x="4" y=".6" width="1.6" height="1.4" fill="#f0b428"/></svg>
<div class="tr" style="left:54px;top:425px">吊耳组件库</div>
<div class="dh" style="left:15px;top:467px;width:14px"></div>
<div class="ex p" style="left:11px;top:463px"></div>
<svg style="left:30px;top:457px" width="17" height="17" viewBox="0 0 17 17"><ellipse cx="8" cy="15.3" rx="7.5" ry="1.6" fill="#e6e6e6"/><path d="M2 1.5l5-1 1.2 8.5-6 .8z" fill="#41be41"/><path d="M8 3.2l3.6-1.2 1.6 5.8 2.2 1.6-2.6 7-3.6-1.2L7.6 9z" fill="#41be41"/><path d="M9 3l2.5-.8.6 2-2.6.9z" fill="#6fe06f"/><path d="M4 3l1 2.5" stroke="#556" stroke-width="1"/><rect x="4" y=".6" width="1.6" height="1.4" fill="#f0b428"/></svg>
<div class="tr" style="left:54px;top:455px">平衡梁库</div>
<div class="dh" style="left:15px;top:497px;width:14px"></div>
<div class="ex p" style="left:11px;top:493px"></div>
<svg style="left:30px;top:487px" width="17" height="17" viewBox="0 0 17 17"><ellipse cx="8" cy="15.3" rx="7.5" ry="1.6" fill="#e6e6e6"/><path d="M2 1.5l5-1 1.2 8.5-6 .8z" fill="#41be41"/><path d="M8 3.2l3.6-1.2 1.6 5.8 2.2 1.6-2.6 7-3.6-1.2L7.6 9z" fill="#41be41"/><path d="M9 3l2.5-.8.6 2-2.6.9z" fill="#6fe06f"/><path d="M4 3l1 2.5" stroke="#556" stroke-width="1"/><rect x="4" y=".6" width="1.6" height="1.4" fill="#f0b428"/></svg>
<div class="tr" style="left:54px;top:485px">标准规范</div>
<div style="left:220px;top:89px;width:93px;height:23px;background:#fcfcfc;border-right:1px solid #e0e0e0"></div>
<div style="left:228px;top:93px;height:18px;line-height:18px;font-size:12.5px;letter-spacing:.4px;font-weight:bold;white-space:nowrap;font-family:'Liberation Serif','Noto Serif CJK SC',serif">起吊设备选择</div>
<div style="left:222px;top:112px;width:1374px;height:1px;background:#fcfcfc"></div>
<div style="left:224px;top:113px;width:1372px;height:1px;background:#8dcdf9"></div>
<div style="left:221px;top:114px;width:1377px;height:2px;background:#6d6d6d"></div>
<div style="left:223px;top:116px;width:1375px;height:1px;background:#fbfbfb"></div>
<div style="left:221px;top:114px;width:1px;height:1018px;background:#747474"></div>
<div class="tab" style="left:224px;top:119px;width:75px;height:18px;"><div class="t" style="left:5px;top:0">1起重机选型</div></div>
<div class="tab" style="left:501px;top:119px;width:99px;height:18px;"><div class="t" style="left:4px;top:0">4地基承载力核算</div></div>
<div class="tab" style="left:601px;top:119px;width:63px;height:18px;"><div class="t" style="left:6px;top:0">5压载试验</div></div>
<div class="tab sel" style="left:300px;top:117px;width:200px;height:21px;"><div class="t" style="left:7px;top:1px">3汽车吊支腿反力及静态稳定性计算</div></div>
<div style="left:222px;top:136px;width:1376px;height:1px;background:#e3e3e3"></div>
<div style="left:226px;top:138px;width:609px;height:990px;background:#fff"></div>
<div class="gb" style="left:237px;top:149px;width:588px;height:32px;"></div>
<div class="t gl" style="left:243px;top:140px;">0.吊车型号</div>
<div class="cb" style="left:241px;top:160px"></div>
<div class="t" style="left:259px;top:159px;">从库读取</div>
<div class="t" style="left:315px;top:159px;">吊车类别</div>
<div class="cmb" style="left:374px;top:157px;width:93px;height:18px;"></div>
<div class="t" style="left:475px;top:159px;">吊车厂商</div>
<div class="cmb" style="left:534px;top:157px;width:93px;height:18px;"></div>
<div class="t" style="left:637px;top:159px;">吊车型号</div>
<div class="cmb" style="left:691px;top:157px;width:110px;height:18px;"></div>
<div style="left:807px;top:159px;width:15px;height:14px;border:1px solid #adadad;background:#e1e1e1"><svg width="15" height="14" viewBox="0 0 15 14" style="left:0;top:0"><path d="M4 4l3 2 4 5" stroke="#3b6fe0" stroke-width="1.5" fill="none"/><circle cx="5" cy="5" r="1.6" fill="#7cc4f5"/><rect x="5" y="11" width="2" height="1" fill="#000"/></svg></div>
<div class="gb" style="left:230px;top:191px;width:600px;height:129px;"></div>
<div class="t gl" style="left:236px;top:182px;">1.有效重量</div>
<div class="t" style="left:238px;top:200px;">吊车上部重量 G1</div>
<div class="ro" style="left:344px;top:198px;width:81px;height:19px;"><span class="sv" style="left:0;right:0;top:0">78.63</span></div>
<div class="t" style="left:438px;top:200px;">吨</div>
<div class="t" style="left:514px;top:200px;">吊车下部重量 G0</div>
<div class="sp" style="left:614px;top:198px;width:80px;height:19px;"><i class="sb" style="left:1px"></i><span class="sv" style="left:16px;right:1px">43.57</span></div>
<div class="t" style="left:708px;top:200px;">吨</div>
<div class="t" style="left:745px;top:199px;color:#f00;text-decoration:underline">重要说明!</div>
<div class="gb" style="left:233px;top:232px;width:596px;height:84px;"></div>
<div class="t gl" style="left:239px;top:223px;">吊车G1</div>
<div class="t" style="left:238px;top:247px;">配重 G11</div>
<div class="sp" style="left:295px;top:245px;width:57px;height:19px;"><i class="sb" style="left:1px"></i><span class="sv" style="left:16px;right:1px">38.00</span></div>
<div class="t" style="left:360px;top:247px;">吨</div>
<div class="t" style="left:382px;top:247px;">吊重 G12</div>
<div class="sp" style="left:439px;top:245px;width:58px;height:19px;"><i class="sb" style="left:1px"></i><span class="sv" style="left:16px;right:1px">22.00</span></div>
<div class="t" style="left:505px;top:247px;">吨</div>
<div class="t" style="left:525px;top:247px;">其他 G14</div>
<div class="sp" style="left:583px;top:245px;width:58px;height:19px;"><i class="sb" style="left:1px"></i><span class="sv" style="left:16px;right:1px">9.33</span></div>
<div class="t" style="left:649px;top:247px;">吨</div>
<div class="t" style="left:673px;top:247px;">吊臂重 G13</div>
<div class="sp" style="left:741px;top:245px;width:58px;height:19px;"><i class="sb" style="left:1px"></i><span class="sv" style="left:16px;right:1px">9.30</span></div>
<div class="t" style="left:810px;top:247px;">吨</div>
<div class="gb" style="left:234px;top:279px;width:594px;height:33px;"></div>
<div class="t gl" style="left:239px;top:270px;">吊臂重量</div>
<div class="t" style="left:238px;top:289px;">基础臂</div>
<div class="sp" style="left:280px;top:287px;width:58px;height:19px;"><i class="sb" style="left:1px"></i><span class="sv" style="left:16px;right:1px">9.30</span></div>
<div class="t" style="left:346px;top:289px;">吨</div>
<div class="cb" style="left:364px;top:291px"></div>
<div class="t" style="left:382px;top:289px;">加长主臂</div>
<div class="sp dis" style="left:438px;top:287px;width:58px;height:19px;"><i class="sb" style="left:1px"></i><span class="sv" style="left:16px;right:1px">12.44</span></div>
<div class="t" style="left:502px;top:289px;">吨</div>
<div class="cb" style="left:525px;top:291px"></div>
<div class="t" style="left:543px;top:289px;">超起臂</div>
<div class="sp dis" style="left:589px;top:287px;width:58px;height:19px;"><i class="sb" style="left:1px"></i><span class="sv" style="left:16px;right:1px">13.68</span></div>
<div class="t" style="left:656px;top:289px;">吨</div>
<div class="cb" style="left:684px;top:291px"></div>
<div class="t" style="left:702px;top:289px;">副臂</div>
<div class="sp dis" style="left:740px;top:287px;width:58px;height:19px;"><i class="sb" style="left:1px"></i><span class="sv" style="left:16px;right:1px">15.55</span></div>
<div class="t" style="left:810px;top:289px;">吨</div>
<div class="gb" style="left:232px;top:334px;width:598px;height:29px;"></div>
<div class="t gl" style="left:237px;top:325px;">2. 吊装参数</div>
<div class="t" style="left:245px;top:342px;">吊装半径 R</div>
<div class="sp" style="left:346px;top:341px;width:78px;height:19px;"><i class="sb" style="left:1px"></i><span class="sv" style="left:16px;right:1px">7.10</span></div>
<div class="t u" style="left:441px;top:344px;">m</div>
<div class="t" style="left:500px;top:342px;">吊臂至车尾投影角度 α</div>
<div class="sp" style="left:635px;top:341px;width:81px;height:19px;"><i class="sb" style="left:1px"></i><span class="sv" style="left:16px;right:1px">106.00</span></div>
<div class="t" style="left:731px;top:337px;">°</div>
<div class="gb" style="left:234px;top:375px;width:598px;height:27px;border-right:none;"></div>
<div class="t gl" style="left:239px;top:366px;">3. 支腿间距</div>
<div class="t" style="left:237px;top:381px;">横向间距 2a</div>
<div class="sp" style="left:312px;top:379px;width:78px;height:19px;"><i class="sb" style="left:1px"></i><span class="sv" style="left:16px;right:1px">7.60</span></div>
<div class="t u" style="left:399px;top:383px;">m</div>
<div class="t" style="left:416px;top:381px;">纵向间距 2b</div>
<div class="sp" style="left:489px;top:379px;width:78px;height:19px;"><i class="sb" style="left:1px"></i><span class="sv" style="left:16px;right:1px">7.56</span></div>
<div class="t u" style="left:576px;top:383px;">m</div>
<div class="t" style="left:593px;top:381px;">后配重至转盘中心 r1</div>
<div class="sp" style="left:715px;top:381px;width:78px;height:19px;"><i class="sb" style="left:1px"></i><span class="sv" style="left:16px;right:1px">0.0</span></div>
<div class="t u" style="left:806px;top:385px;">m</div>
<div class="gb" style="left:234px;top:414px;width:598px;height:213px;border-right:none;"></div>
<div class="t gl" style="left:241px;top:405px;">4. 车身参数</div>
<div class="t" style="left:241px;top:427px;">转盘中心距车尾 Rz</div>
<div class="sp" style="left:350px;top:425px;width:80px;height:19px;"><i class="sb" style="left:1px"></i><span class="sv" style="left:16px;right:1px">4.90</span></div>
<div class="t u" style="left:444px;top:429px;">m</div>
<div class="t" style="left:460px;top:427px;">转盘中心距支撑中心 e1</div>
<div class="sp" style="left:589px;top:425px;width:80px;height:19px;"><i class="sb" style="left:1px"></i><span class="sv" style="left:16px;right:1px">0.15</span></div>
<div class="t u" style="left:679px;top:429px;">m</div>
<div class="bg" style="left:693px;top:425px;width:62px;height:19px;line-height:19px;">插入轮轴</div>
<div class="bg" style="left:763px;top:425px;width:64px;height:19px;line-height:19px;">删除轮轴</div>
<div style="left:234px;top:454px;width:596px;height:135px;border:1px solid #000;background:#f0f0f0"></div>
<div style="left:235px;top:455px;width:596px;height:19px;background:#fff;border-bottom:1px solid #a0a0a0"></div>
<div style="left:275px;top:457px;width:1px;height:16px;background:#d0d0d0"></div>
<div style="left:375px;top:457px;width:1px;height:16px;background:#d0d0d0"></div>
<div style="left:527px;top:457px;width:1px;height:16px;background:#d0d0d0"></div>
<div style="left:678px;top:457px;width:1px;height:16px;background:#d0d0d0"></div>
<div class="t" style="left:245px;width:160px;top:457px;text-align:center">轴号(车头起)</div>
<div class="t" style="left:362px;width:160px;top:457px;text-align:center">与后轴或车尾间距(mm)</div>
<div class="t" style="left:513px;width:160px;top:457px;text-align:center">轴承重(kg)</div>
<div class="t" style="left:666px;width:160px;top:457px;text-align:center">距车尾距离（mm）</div>
<div class="t" style="left:249px;top:601px;">手动计算下车重心距车尾Rc和e0</div>
<div class="cb" style="left:424px;top:603px"></div>
<div class="bg" style="left:452px;top:594px;width:77px;height:28px;line-height:28px;">计算</div>
<div class="rd" style="left:567px;top:604px"><i></i></div>
<div class="t" style="left:585px;top:603px;">支腿反力</div>
<div class="rd" style="left:644px;top:604px"></div>
<div class="t" style="left:662px;top:603px;">静态稳定性</div>
<div style="left:735px;top:594px;width:93px;height:26px;line-height:26px;border:2px solid #0078d7;background:#e1e1e1;color:#4a9cf0;text-align:center">自动计算</div>
<div class="gb" style="left:234px;top:656px;width:590px;height:66px;"></div>
<div class="tab sel" style="left:234px;top:635px;width:62px;height:21px;"><div class="t" style="left:7px;top:2px">尺寸参数</div></div>
<div class="tab" style="left:298px;top:637px;width:67px;height:18px;"><div class="t" style="left:3px;top:2px">车上部弯矩</div></div>
<div class="t" style="left:243px;top:667px;">下车重心至车尾 Rc</div>
<div class="sp" style="left:358px;top:665px;width:62px;height:19px;"><i class="sb" style="right:1px"></i><span class="sv" style="left:1px;right:16px">6.780</span></div>
<div class="t u" style="left:430px;top:669px;">m</div>
<div class="t" style="left:443px;top:667px;">下车重心至支撑中心 e0</div>
<div class="sp" style="left:576px;top:665px;width:59px;height:19px;"><i class="sb" style="right:1px"></i><span class="sv" style="left:1px;right:16px">1.73</span></div>
<div class="t u" style="left:648px;top:667px;">m</div>
<div class="t" style="left:679px;top:669px;">支点Lz</div>
<div class="sp dis" style="left:726px;top:667px;width:59px;height:19px;"><i class="sb" style="right:1px"></i><span class="sv" style="left:1px;right:16px">3.95</span></div>
<div class="t u" style="left:796px;top:669px;">m</div>
<div class="t" style="left:246px;top:696px;">下车L0</div>
<div class="sp dis" style="left:294px;top:694px;width:59px;height:19px;"><i class="sb" style="left:1px"></i><span class="sv" style="left:16px;right:1px">-0.52</span></div>
<div class="t u" style="left:366px;top:698px;">m</div>
<div class="t" style="left:386px;top:696px;">配重L1</div>
<div class="sp" style="left:434px;top:694px;width:59px;height:19px;background:#f0f0f0;"><i class="sb" style="left:1px"></i><span class="sv" style="left:16px;right:1px">0.00</span></div>
<div class="t u" style="left:506px;top:698px;">m</div>
<div class="t" style="left:525px;top:696px;">主臂L3</div>
<div class="sp" style="left:574px;top:694px;width:59px;height:19px;"><i class="sb" style="right:1px"></i><span class="sv" style="left:1px;right:16px">2.49</span></div>
<div class="t u" style="left:646px;top:698px;">m</div>
<div class="t" style="left:676px;top:696px;">其他L4</div>
<div class="sp" style="left:725px;top:694px;width:59px;height:19px;"><i class="sb" style="right:1px"></i><span class="sv" style="left:1px;right:16px">0.00</span></div>
<div class="t u" style="left:796px;top:698px;">m</div>
<div class="bt" style="left:654px;top:731px;width:71px;height:19px;line-height:19px;">验&nbsp;&nbsp;算</div>
<div class="bt" style="left:742px;top:731px;width:71px;height:19px;line-height:19px;">Word计算书</div>
<div class="gb" style="left:235px;top:759px;width:597px;height:112px;border-right:none;"></div>
<div class="t gl" style="left:242px;top:750px;">极值计算</div>
<div class="t" style="left:239px;top:774px;">开始夹角 θ</div>
<div class="sp" style="left:313px;top:772px;width:82px;height:19px;"><i class="sb" style="left:1px"></i><span class="sv" style="left:16px;right:1px">0</span></div>
<div class="t" style="left:405px;top:771px;">°</div>
<div class="t" style="left:419px;top:774px;">结束夹角 θ</div>
<div class="sp" style="left:493px;top:772px;width:82px;height:19px;"><i class="sb" style="left:1px"></i><span class="sv" style="left:16px;right:1px">360</span></div>
<div class="t" style="left:586px;top:771px;">°</div>
<div class="t" style="left:596px;top:774px;">增量角度</div>
<div class="sp" style="left:655px;top:772px;width:82px;height:19px;"><i class="sb" style="left:1px"></i><span class="sv" style="left:16px;right:1px">1.0</span></div>
<div class="t" style="left:746px;top:771px;">°</div>
<div class="rd" style="left:752px;top:775px"><i></i></div>
<div class="t" style="left:770px;top:774px;">按回转角度</div>
<div class="t" style="left:237px;top:813px;">开始半径 R</div>
<div class="sp dis" style="left:311px;top:811px;width:82px;height:19px;"><i class="sb" style="left:1px"></i><span class="sv" style="left:16px;right:1px">0</span></div>
<div class="t u" style="left:399px;top:815px;">m</div>
<div class="t" style="left:417px;top:813px;">结束半径 R</div>
<div class="sp dis" style="left:491px;top:811px;width:82px;height:19px;"><i class="sb" style="left:1px"></i><span class="sv" style="left:16px;right:1px">90</span></div>
<div class="t u" style="left:580px;top:815px;">m</div>
<div class="t" style="left:594px;top:813px;">增量半径</div>
<div class="sp dis" style="left:653px;top:811px;width:82px;height:19px;"><i class="sb" style="left:1px"></i><span class="sv" style="left:16px;right:1px">0.5</span></div>
<div class="t u" style="left:742px;top:816px;">m</div>
<div class="rd" style="left:752px;top:812px"></div>
<div class="t" style="left:770px;top:811px;">按吊装半径</div>
<div class="t" style="left:239px;top:847px;">最大值 <em style="font-style:normal;letter-spacing:-.8px">Rmax</em></div>
<div class="ro" style="left:311px;top:844px;width:79px;height:19px;"><span class="sv" style="left:0;right:0;top:0">0</span></div>
<div class="t" style="left:403px;top:847px;">t</div>
<div class="bt" style="left:613px;top:843px;width:72px;height:26px;line-height:26px;">计算极值</div>
<div class="bt" style="left:692px;top:843px;width:130px;height:26px;line-height:26px;">极值核算地基承载力</div>
<div class="gb" style="left:234px;top:885px;width:598px;height:115px;border-right:none;"></div>
<div class="t gl" style="left:239px;top:876px;">5. 结果</div>
<div class="gb" style="left:236px;top:916px;width:592px;height:56px;"></div>
<div class="tab sel" style="left:236px;top:896px;width:62px;height:20px;"><div class="t" style="left:7px;top:2px">支腿反力</div></div>
<div class="tab" style="left:300px;top:898px;width:43px;height:17px;"><div class="t" style="left:3px;top:2px">稳定性</div></div>
<div class="t" style="left:249px;top:923px;">前左支腿反力 R1</div>
<div class="gr" style="left:361px;top:920px;width:79px;height:19px;"><span class="sv" style="left:0;right:0;top:0">26.68</span></div>
<div class="t" style="left:449px;top:923px;">t</div>
<div class="t" style="left:510px;top:924px;">前右支腿反力 R2</div>
<div class="gr" style="left:623px;top:922px;width:79px;height:19px;"><span class="sv" style="left:0;right:0;top:0">49.36</span></div>
<div class="t" style="left:715px;top:925px;">t</div>
<div class="t" style="left:247px;top:948px;">后右支腿反力 R3</div>
<div class="gr" style="left:359px;top:946px;width:79px;height:19px;"><span class="sv" style="left:0;right:0;top:0">34.42</span></div>
<div class="t" style="left:451px;top:949px;">t</div>
<div class="t" style="left:508px;top:948px;">后左支腿反力 R4</div>
<div class="gr" style="left:623px;top:946px;width:79px;height:19px;"><span class="sv" style="left:0;right:0;top:0">11.74</span></div>
<div class="t" style="left:718px;top:949px;">t</div>
<div class="bt" style="left:549px;top:978px;width:60px;height:21px;line-height:21px;">打开</div>
<div class="bt" style="left:619px;top:978px;width:60px;height:21px;line-height:21px;">保存</div>
<div class="bt" style="left:695px;top:979px;width:84px;height:21px;line-height:21px;line-height:17px">地基承载力核</div>
<div style="left:835px;top:139px;width:758px;height:809px;background:#fff"></div>
<div style="left:833px;top:948px;width:762px;height:182px;background:#fff"></div>
<div style="left:833px;top:948px;width:760px;height:3px;background:#828282"></div>
<div style="left:833px;top:948px;width:3px;height:179px;background:#828282"></div>
<div style="left:836px;top:951px;width:756px;height:175px;background:#90ee90"></div>
<div class="t" style="left:837px;top:953px">通过以上计算得到:</div>
<div class="t" style="left:837px;top:969px">1）支腿对地面最大的压力为：49.36 吨。</div>
<div class="t" style="left:837px;top:985px">2）支腿对地面最小的压力为：11.74 吨。</div>
<div class="t" style="left:837px;top:1001px">3）支腿对支垫的合计压力为：122.20 吨</div>
<svg style="left:835px;top:139px" width="758" height="809" viewBox="835 139 758 809" font-family="Liberation Sans,Arial,sans-serif"><path d="M1267 236L1267 905" stroke="#a8a8a8" stroke-width="1.3" stroke-dasharray="7 4" fill="none"/><path d="M1201.5 393L1201.5 726" stroke="#a8a8a8" stroke-width="1.3" stroke-dasharray="7 4" fill="none"/><path d="M1012.5 541.5L1260 687" stroke="#333" stroke-width="1" stroke-dasharray="26 9" fill="none"/><path d="M1056.25 519L1301.25 662" stroke="#333" stroke-width="1" stroke-dasharray="26 9" fill="none"/><path d="M1173.75 461L1405 599" stroke="#333" stroke-width="1" stroke-dasharray="26 9" fill="none"/><path d="M893.25 665.5L1138.25 821" stroke="#333" stroke-width="1.2" stroke-dasharray="8 4" fill="none"/><path d="M1138.25 821L1465 626.25" stroke="#333" stroke-width="1.2" stroke-dasharray="8 4" fill="none"/><path d="M1015.5 684L1015.5 743" stroke="#333" stroke-width="1.2" stroke-dasharray="8 4" fill="none"/><path d="M1301.25 663L1301.25 724" stroke="#333" stroke-width="1.2" stroke-dasharray="8 4" fill="none"/><path d="M1136.25 614.25L1267 842.5" stroke="#333" stroke-width="1.2" stroke-dasharray="8 4" fill="none"/><path d="M893.25 603.25L1223.75 433" stroke="#2d4bff" stroke-width="1.3" stroke-dasharray="8 5" fill="none"/><path d="M1138 759L1465 563.75" stroke="#2d4bff" stroke-width="1.3" stroke-dasharray="8 5" fill="none"/><ellipse cx="1135" cy="613.5" rx="43" ry="25" stroke="#2d4bff" stroke-width="1.3" stroke-dasharray="8 5" fill="none" transform="rotate(8 1135 613.5)"/><ellipse cx="1178" cy="589" rx="15.5" ry="9" stroke="#2d4bff" stroke-width="1.3" stroke-dasharray="8 5" fill="none"/><ellipse cx="1288" cy="530" rx="15" ry="8.5" stroke="#2d4bff" stroke-width="1.3" stroke-dasharray="8 5" fill="none"/><path d="M893.25 603.25L1015 681.25L1138 759" stroke="#000" stroke-width="3" fill="none" stroke-linejoin="miter"/><path d="M1223.75 433L1343.75 498.75L1465 563.75" stroke="#000" stroke-width="3" fill="none" stroke-linejoin="miter"/><path d="M893.25 603.25L893.25 665.5" stroke="#000" stroke-width="3" fill="none" stroke-linejoin="miter"/><path d="M1223.75 433L1223.75 495" stroke="#000" stroke-width="3" fill="none" stroke-linejoin="miter"/><path d="M1465 563.75L1465 626.25" stroke="#000" stroke-width="3" fill="none" stroke-linejoin="miter"/><path d="M1138 759L1138.25 821" stroke="#000" stroke-width="3" fill="none" stroke-linejoin="miter"/><path d="M1015 681.25L1343.75 498.75" stroke="#000" stroke-width="6.5" stroke-linecap="round"/><path d="M1136.25 545L1136.25 615.25" stroke="#000" stroke-width="6"/><path d="M1051.75 400L1136.25 545L1266.75 235" stroke="#000" stroke-width="4.4" fill="none" stroke-linejoin="miter"/><path d="M864.5 680L921.5 652" stroke="#000" stroke-width="3"/><path d="M864.5 680.0l-2.2 4.4M867.9 678.4l-2.2 4.4M871.2 676.7l-2.2 4.4M874.6 675.1l-2.2 4.4M877.9 673.4l-2.2 4.4M881.3 671.8l-2.2 4.4M884.6 670.1l-2.2 4.4M888.0 668.5l-2.2 4.4M891.3 666.8l-2.2 4.4M894.7 665.2l-2.2 4.4M898.0 663.5l-2.2 4.4M901.4 661.9l-2.2 4.4M904.7 660.2l-2.2 4.4M908.1 658.6l-2.2 4.4M911.4 656.9l-2.2 4.4M914.8 655.3l-2.2 4.4M918.1 653.6l-2.2 4.4M921.5 652.0l-2.2 4.4" stroke="#111" stroke-width="1"/><path d="M1201 510L1245 484" stroke="#000" stroke-width="3"/><path d="M1201.0 510.0l-2.2 4.4M1204.1 508.1l-2.2 4.4M1207.3 506.3l-2.2 4.4M1210.4 504.4l-2.2 4.4M1213.6 502.6l-2.2 4.4M1216.7 500.7l-2.2 4.4M1219.9 498.9l-2.2 4.4M1223.0 497.0l-2.2 4.4M1226.1 495.1l-2.2 4.4M1229.3 493.3l-2.2 4.4M1232.4 491.4l-2.2 4.4M1235.6 489.6l-2.2 4.4M1238.7 487.7l-2.2 4.4M1241.9 485.9l-2.2 4.4M1245.0 484.0l-2.2 4.4" stroke="#111" stroke-width="1"/><path d="M1443.5 640L1482.5 614.5" stroke="#000" stroke-width="3"/><path d="M1443.5 640.0l-2.2 4.4M1446.8 637.9l-2.2 4.4M1450.0 635.8l-2.2 4.4M1453.2 633.6l-2.2 4.4M1456.5 631.5l-2.2 4.4M1459.8 629.4l-2.2 4.4M1463.0 627.2l-2.2 4.4M1466.2 625.1l-2.2 4.4M1469.5 623.0l-2.2 4.4M1472.8 620.9l-2.2 4.4M1476.0 618.8l-2.2 4.4M1479.2 616.6l-2.2 4.4M1482.5 614.5l-2.2 4.4" stroke="#111" stroke-width="1"/><path d="M1113.5 839L1162 807.5" stroke="#000" stroke-width="3"/><path d="M1113.5 839.0l-2.2 4.4M1116.5 837.0l-2.2 4.4M1119.6 835.1l-2.2 4.4M1122.6 833.1l-2.2 4.4M1125.6 831.1l-2.2 4.4M1128.7 829.2l-2.2 4.4M1131.7 827.2l-2.2 4.4M1134.7 825.2l-2.2 4.4M1137.8 823.2l-2.2 4.4M1140.8 821.3l-2.2 4.4M1143.8 819.3l-2.2 4.4M1146.8 817.3l-2.2 4.4M1149.9 815.4l-2.2 4.4M1152.9 813.4l-2.2 4.4M1155.9 811.4l-2.2 4.4M1159.0 809.5l-2.2 4.4M1162.0 807.5l-2.2 4.4" stroke="#111" stroke-width="1"/><path d="M883 583.75L1005 525" stroke="#00f000" stroke-width="1.2" fill="none"/><path d="M883.0 583.8L892.0 577.0L893.9 581.0z" fill="#00f000"/><path d="M1005.0 525.0L996.0 531.8L994.1 527.8z" fill="#00f000"/><path d="M881 580L890 596" stroke="#00f000" stroke-width="1.2" fill="none"/><path d="M1001 518.5L1010 535" stroke="#00f000" stroke-width="1.2" fill="none"/><path d="M1000.75 432L1083.75 575.75" stroke="#00f000" stroke-width="1.2" fill="none"/><path d="M1000.8 432.0L1008.2 440.4L1004.3 442.6z" fill="#00f000"/><path d="M1083.8 575.8L1076.3 567.3L1080.2 565.1z" fill="#00f000"/><path d="M995.75 434.25L1047 405" stroke="#00f000" stroke-width="1.2" fill="none"/><path d="M1080 578.75L1130 550" stroke="#00f000" stroke-width="1.2" fill="none"/><path d="M1063.75 493.75L1102.5 564.25" stroke="#00f000" stroke-width="1.2" fill="none"/><path d="M1063.8 493.8L1071.0 502.3L1067.1 504.4z" fill="#00f000"/><path d="M1102.5 564.2L1095.3 555.7L1099.1 553.6z" fill="#00f000"/><path d="M1060 491.25L1088.25 476.25" stroke="#00f000" stroke-width="1.2" fill="none"/><path d="M1141 613L1180 591.5" stroke="#00f000" stroke-width="1.2" fill="none"/><path d="M1150 608.75L1213.25 720" stroke="#00f000" stroke-width="1.2" fill="none"/><path d="M1150.0 608.8L1157.3 617.2L1153.5 619.4z" fill="#00f000"/><path d="M1213.2 720.0L1205.9 711.5L1209.7 709.4z" fill="#00f000"/><path d="M1207.5 724.5L1218.75 718.75" stroke="#00f000" stroke-width="1.2" fill="none"/><path d="M1173.75 596.25L1302.5 821.25" stroke="#00f000" stroke-width="1.2" fill="none"/><path d="M1173.8 596.2L1181.1 604.7L1177.3 606.9z" fill="#00f000"/><path d="M1302.5 821.2L1295.1 812.8L1298.9 810.6z" fill="#00f000"/><path d="M1273.25 838.75L1307 820" stroke="#00f000" stroke-width="1.2" fill="none"/><path d="M1315 682.5L1418.75 623.75" stroke="#00f000" stroke-width="1.2" fill="none"/><path d="M1315.0 682.5L1323.5 675.2L1325.7 679.0z" fill="#00f000"/><path d="M1418.8 623.8L1410.3 631.1L1408.1 627.3z" fill="#00f000"/><path d="M1408.75 605L1447.5 671.25" stroke="#00f000" stroke-width="1.2" fill="none"/><path d="M1272.5 707.5L1315 683.75" stroke="#00f000" stroke-width="1.2" fill="none"/><path d="M1272.5 707.5L1281.0 700.2L1283.2 704.1z" fill="#00f000"/><path d="M1315.0 683.8L1306.5 691.0L1304.3 687.2z" fill="#00f000"/><path d="M1263.75 692.5L1275 713.75" stroke="#00f000" stroke-width="1.2" fill="none"/><path d="M1305 667.5L1317.5 690" stroke="#00f000" stroke-width="1.2" fill="none"/><path d="M1178.75 825L1446.25 668.75" stroke="#00f000" stroke-width="1.2" fill="none"/><path d="M1178.8 825.0L1187.1 817.6L1189.4 821.4z" fill="#00f000"/><path d="M1446.2 668.8L1437.9 676.2L1435.6 672.4z" fill="#00f000"/><path d="M1162.5 860.75L1490 668.75" stroke="#00f000" stroke-width="1.2" fill="none"/><path d="M1162.5 860.8L1170.9 853.3L1173.1 857.1z" fill="#00f000"/><path d="M1490.0 668.8L1481.6 676.2L1479.4 672.4z" fill="#00f000"/><path d="M1325.0 765.5L1316.6 773.0L1314.4 769.2z" fill="#00f000"/><path d="M1325.0 765.5L1333.4 758.0L1335.6 761.8z" fill="#00f000"/><path d="M1305 731.25L1327.5 770" stroke="#00f000" stroke-width="1.2" fill="none"/><path d="M1468.75 632.5L1492.5 672.5" stroke="#00f000" stroke-width="1.2" fill="none"/><path d="M1141.25 766.25L1180 831.25" stroke="#00f000" stroke-width="1.2" fill="none"/><path d="M1142.5 830L1165 867.5" stroke="#00f000" stroke-width="1.2" fill="none"/><path d="M873.75 697L1118.75 852" stroke="#00f000" stroke-width="1.2" fill="none"/><path d="M873.8 697.0L884.2 701.0L881.9 704.7z" fill="#00f000"/><path d="M1118.8 852.0L1108.3 848.0L1110.6 844.3z" fill="#00f000"/><path d="M996.3 774.5L985.8 770.5L988.2 766.8z" fill="#00f000"/><path d="M996.3 774.5L1006.8 778.5L1004.4 782.2z" fill="#00f000"/><path d="M1012 749.5L993.75 778.75" stroke="#00f000" stroke-width="1.2" fill="none"/><path d="M890 670L870.5 701.25" stroke="#00f000" stroke-width="1.2" fill="none"/><path d="M1135 825L1116.25 857.5" stroke="#00f000" stroke-width="1.2" fill="none"/><path d="M1065 655.75A83 83 0 0 0 1177 687" stroke="#00f000" stroke-width="1.2" fill="none"/><path d="M1065.0 655.8L1071.2 662.6L1067.7 664.6z" fill="#00f000"/><path d="M1177.0 687.0L1169.3 692.1L1167.9 688.4z" fill="#00f000"/><text x="942" y="555" fill="#00f000" font-size="21" text-anchor="middle" transform="rotate(-27 942 555)" >Rz</text><text x="1046" y="507" fill="#00f000" font-size="21" text-anchor="middle" transform="rotate(60 1046 507)" >r1</text><text x="1084" y="526" fill="#00f000" font-size="21" text-anchor="middle" transform="rotate(60 1084 526)" >L4</text><text x="1124" y="694" fill="#00f000" font-size="30" text-anchor="middle" transform="rotate(0 1124 694)" font-style="italic">α</text><text x="1187" y="664" fill="#00f000" font-size="21" text-anchor="middle" transform="rotate(60 1187 664)" >L3</text><text x="1250" y="724" fill="#00f000" font-size="21" text-anchor="middle" transform="rotate(60 1250 724)" >R</text><text x="1365" y="654" fill="#00f000" font-size="21" text-anchor="middle" transform="rotate(-30 1365 654)" >e0</text><text x="1294" y="694" fill="#00f000" font-size="21" text-anchor="middle" transform="rotate(-30 1294 694)" >e1</text><text x="1333" y="732" fill="#00f000" font-size="21" text-anchor="middle" transform="rotate(-30 1333 732)" >Rc</text><text x="1242" y="815" fill="#00f000" font-size="21" text-anchor="middle" transform="rotate(-30 1242 815)" >b</text><text x="1406" y="716" fill="#00f000" font-size="21" text-anchor="middle" transform="rotate(-30 1406 716)" >b</text><text x="936" y="734" fill="#00f000" font-size="21" text-anchor="middle" transform="rotate(32 936 734)" >a</text><text x="1058" y="813" fill="#00f000" font-size="21" text-anchor="middle" transform="rotate(32 1058 813)" >a</text><path d="M1266.75 175.5V235M1258.75 211L1266.75 235L1274.75 211" stroke="#ff2a2a" stroke-width="1.1" fill="none"/><path d="M1201.25 330V392M1193.75 368L1201.25 392L1208.75 368" stroke="#ff2a2a" stroke-width="1.1" fill="none"/><path d="M1052.5 340V400M1044.5 376L1052.5 400L1060.5 376" stroke="#ff2a2a" stroke-width="1.1" fill="none"/><path d="M1095 414V471M1087.5 447L1095 471L1102.5 447" stroke="#ff2a2a" stroke-width="1.1" fill="none"/><path d="M1136.25 428V545M1128.75 521L1136.25 545L1143.75 521" stroke="#ff2a2a" stroke-width="1.1" fill="none"/><path d="M1287.5 437.5V529M1280.0 505L1287.5 529L1295.0 505" stroke="#ff2a2a" stroke-width="1.1" fill="none"/><path d="M1224.5 544V495M1216.5 519L1224.5 495L1232.5 519" stroke="#ff2a2a" stroke-width="1.1" fill="none"/><path d="M1465 685V626M1457.5 650L1465 626L1472.5 650" stroke="#ff2a2a" stroke-width="1.1" fill="none"/><path d="M1138.75 881V821M1132.25 845L1138.75 821L1145.25 845" stroke="#ff2a2a" stroke-width="1.1" fill="none"/><path d="M893.25 724V666M885.75 690L893.25 666L900.75 690" stroke="#ff2a2a" stroke-width="1.1" fill="none"/><path d="M1217.9 233.2A50 50 0 0 1 1315.4 239.2" stroke="#ff2a2a" stroke-width="1.1" fill="none"/><path d="M1296 224L1315.4 239.2L1315 216.5" stroke="#ff2a2a" stroke-width="1.1" fill="none"/><path d="M1151.7 389.1A50 50 0 0 1 1249.5 395.0" stroke="#ff2a2a" stroke-width="1.1" fill="none"/><path d="M1230.5 378.5L1249.5 395.0L1249 371" stroke="#ff2a2a" stroke-width="1.1" fill="none"/><path d="M1084.6 509.5A50 50 0 0 1 1176.2 527.3" stroke="#ff2a2a" stroke-width="1.1" fill="none"/><path d="M1157.5 516L1176.2 527.3L1177 505" stroke="#ff2a2a" stroke-width="1.1" fill="none"/><path d="M1074.8 368.7A24 24 0 0 0 1028.9 362.6" stroke="#ff2a2a" stroke-width="1.1" fill="none"/><path d="M1029.5 350L1028.9 362.6L1040.5 358.5" stroke="#ff2a2a" stroke-width="1.1" fill="none"/><path d="M1117.6 441.7A25 25 0 0 0 1070.7 434.7" stroke="#ff2a2a" stroke-width="1.1" fill="none"/><path d="M1071 422.5L1070.7 434.7L1084 428" stroke="#ff2a2a" stroke-width="1.1" fill="none"/><text x="1246.5" y="168" fill="#ff1a1a" font-size="20.6">G12</text><text x="1275.5" y="195" fill="#ff1a1a" font-size="20.6">M1</text><text x="1181.5" y="321" fill="#ff1a1a" font-size="20.6">G13</text><text x="1167.5" y="345" fill="#ff1a1a" font-size="20.6">M3</text><text x="1036.5" y="329" fill="#ff1a1a" font-size="20.6">G11</text><text x="1063.5" y="350" fill="#ff1a1a" font-size="20.6">M2</text><text x="1074.5" y="393" fill="#ff1a1a" font-size="20.6">G14</text><text x="1065.5" y="413" fill="#ff1a1a" font-size="20.6">M4</text><text x="1120.5" y="422" fill="#ff1a1a" font-size="20.6">G1</text><text x="1108.5" y="478" fill="#ff1a1a" font-size="20.6">M</text><text x="1275.5" y="430" fill="#ff1a1a" font-size="20.6">G0</text><text x="1208.5" y="560" fill="#ff1a1a" font-size="20.6">R1</text><text x="1454.5" y="705" fill="#ff1a1a" font-size="20.6">R2</text><text x="1126.5" y="900" fill="#ff1a1a" font-size="20.6">R3</text><text x="879.5" y="742" fill="#ff1a1a" font-size="20.6">R4</text><path d="M1269.0 236.0L1274.5 238.9L1272.3 241.3z" fill="#b4b4b4"/><path d="M1051.0 399.0L1045.1 397.1L1046.8 394.4z" fill="#b4b4b4"/><path d="M1093.0 470.8L1087.0 469.2L1088.6 466.4z" fill="#b4b4b4"/><path d="M1203.0 392.5L1209.2 392.5L1208.4 395.6z" fill="#b4b4b4"/><path d="M1290.0 530.5L1294.9 526.7L1296.2 529.7z" fill="#b4b4b4"/><path d="M1466.5 624.0L1468.0 618.0L1470.8 619.6z" fill="#b4b4b4"/><path d="M1136.0 614.0L1130.0 615.5L1130.0 612.3z" fill="#b4b4b4"/><path d="M1180.0 589.8L1186.2 589.6L1185.5 592.7z" fill="#b4b4b4"/><path d="M1138.0 823.0L1137.4 829.2L1134.4 828.1z" fill="#b4b4b4"/><path d="M1270 237L1331 294L1341 294" stroke="#bcbcbc" stroke-width="1.2" fill="none"/><text x="1342" y="301" fill="#bebebe" font-size="19" letter-spacing="1.2" font-family="'Liberation Serif','Noto Serif CJK SC',serif" font-weight="300">吊物重量</text><path d="M1001 372.5L1010 372.5L1050 398.5" stroke="#bcbcbc" stroke-width="1.2" fill="none"/><text x="919" y="373" fill="#bebebe" font-size="19" letter-spacing="1.2" font-family="'Liberation Serif','Noto Serif CJK SC',serif" font-weight="300">车后配重</text><path d="M987.5 415L997.5 415L1092.5 470.5" stroke="#bcbcbc" stroke-width="1.2" fill="none"/><text x="904" y="417" fill="#bebebe" font-size="19" letter-spacing="1.2" font-family="'Liberation Serif','Noto Serif CJK SC',serif" font-weight="300">其他重量</text><path d="M1203 392.5L1252.5 405.5L1263 405.5" stroke="#bcbcbc" stroke-width="1.2" fill="none"/><text x="1264" y="413" fill="#bebebe" font-size="19" letter-spacing="1.2" font-family="'Liberation Serif','Noto Serif CJK SC',serif" font-weight="300">吊臂重量</text><path d="M1400 503.5H1392Q1340 508 1291 530" stroke="#bcbcbc" stroke-width="1.2" fill="none"/><text x="1401" y="512" fill="#bebebe" font-size="19" letter-spacing="1.2" font-family="'Liberation Serif','Noto Serif CJK SC',serif" font-weight="300">车下部重心</text><path d="M1510 564.5L1500 564.5L1467 623" stroke="#bcbcbc" stroke-width="1.2" fill="none"/><text x="1511" y="572" fill="#bebebe" font-size="19" letter-spacing="1.2" font-family="'Liberation Serif','Noto Serif CJK SC',serif" font-weight="300">前支腿</text><path d="M1031 612.5L1135 614" stroke="#bcbcbc" stroke-width="1.2" fill="none"/><text x="949" y="613" fill="#bebebe" font-size="19" letter-spacing="1.2" font-family="'Liberation Serif','Noto Serif CJK SC',serif" font-weight="300">转盘中心</text><path d="M1241 600Q1215 598 1181 590" stroke="#bcbcbc" stroke-width="1.2" fill="none"/><text x="1245" y="607" fill="#bebebe" font-size="19" letter-spacing="1.2" font-family="'Liberation Serif','Noto Serif CJK SC',serif" font-weight="300">支腿几何中心</text><path d="M1095 910L1106 910L1137.5 824" stroke="#bcbcbc" stroke-width="1.2" fill="none"/><text x="1034" y="911" fill="#bebebe" font-size="19" letter-spacing="1.2" font-family="'Liberation Serif','Noto Serif CJK SC',serif" font-weight="300">后支腿</text></svg>
<div style="left:226px;top:138px;width:1368px;height:1px;background:#696969"></div>
<div style="left:226px;top:138px;width:1px;height:990px;background:#606060"></div>
<div style="left:226px;top:1127px;width:609px;height:1px;background:#606060"></div>
<div style="left:833px;top:138px;width:2px;height:990px;background:#696969"></div>
<div style="left:1593px;top:138px;width:1px;height:811px;background:#696969"></div>
<div style="left:1595px;top:137px;width:1px;height:993px;background:#fff"></div>
<div style="left:1598px;top:116px;width:1px;height:1016px;background:#e3e3e3"></div>
<div style="left:222px;top:1131px;width:1376px;height:1px;background:#e3e3e3"></div>
<div style="left:227px;top:1128px;width:1368px;height:2px;background:#fff"></div>
<div style="left:1496px;top:1147px;width:0;height:0;border-left:3px solid transparent;border-right:3px solid transparent;border-top:4px solid #000"></div>
<svg style="left:1514px;top:1138px" width="20" height="20" viewBox="0 0 20 20"><rect width="20" height="20" fill="#fff"/><ellipse cx="7" cy="10" rx="6" ry="9.5" fill="#45c545"/><rect x="7" y=".5" width="6" height="19" fill="#45c545"/><ellipse cx="13" cy="10" rx="6" ry="9.5" fill="#45c545"/><ellipse cx="13.5" cy="10" rx="4.8" ry="8.3" fill="#fff"/></svg>
<div class="t lk" style="left:1546px;top:1140px">吊装助理</div>
</body></html>
